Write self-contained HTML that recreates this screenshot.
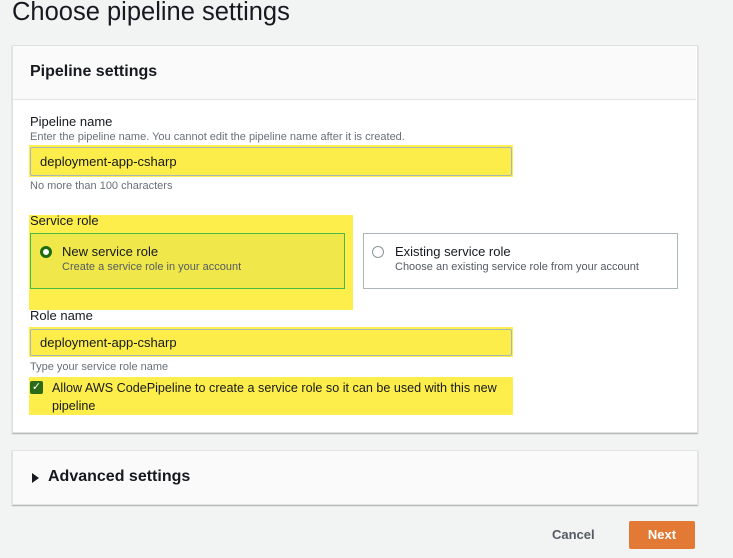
<!DOCTYPE html>
<html><head><style>
body{margin:0;width:733px;height:558px;background:#f2f3f3;font-family:"Liberation Sans",sans-serif;position:relative;overflow:hidden;color:#16191f}
.a{position:absolute}
</style></head><body>
<div class="a" style="left:12px;top:-2px;font-size:25.5px;color:#16191f">Choose pipeline settings</div>
<div class="a" style="left:12px;top:45px;width:684px;height:386px;background:#fff;border:1px solid #e0e0e0;box-shadow:0 1px 1px #aaa"></div>
<div class="a" style="left:13px;top:46px;width:683px;height:53px;background:#fafafa;border-bottom:1px solid #e4e4e4"></div>
<div class="a" style="left:30px;top:63px;font-size:16px;font-weight:bold">Pipeline settings</div>
<div class="a" style="left:30px;top:114px;font-size:13px">Pipeline name</div>
<div class="a" style="left:30px;top:131px;font-size:11px;color:#687078">Enter the pipeline name. You cannot edit the pipeline name after it is created.</div>
<div class="a" style="left:29px;top:145px;width:484px;height:32px;background:#fdee4b"></div>
<div class="a" style="left:30px;top:147px;width:480px;height:27px;border:1px solid #aab7b8;border-radius:2px;background:#fced4a"></div>
<div class="a" style="left:40px;top:154px;font-size:13px">deployment-app-csharp</div>
<div class="a" style="left:30px;top:180px;font-size:11px;color:#687078">No more than 100 characters</div>
<div class="a" style="left:29px;top:215px;width:324px;height:95px;background:#fdee4b"></div>
<div class="a" style="left:30px;top:213px;font-size:13px">Service role</div>
<div class="a" style="left:30px;top:233px;width:313px;height:54px;border:1px solid #44b944;background:#f0e84a"></div>
<div class="a" style="left:40px;top:246px;width:6px;height:6px;border:3px solid #1d6b10;border-radius:50%;background:#fff"></div>
<div class="a" style="left:62px;top:244px;font-size:13px">New service role</div>
<div class="a" style="left:62px;top:261px;font-size:11px;color:#545b64">Create a service role in your account</div>
<div class="a" style="left:363px;top:233px;width:313px;height:54px;border:1px solid #aab7b8;background:#fff"></div>
<div class="a" style="left:372px;top:246px;width:10px;height:10px;border:1px solid #879596;border-radius:50%"></div>
<div class="a" style="left:395px;top:244px;font-size:13px">Existing service role</div>
<div class="a" style="left:395px;top:261px;font-size:11px;color:#545b64">Choose an existing service role from your account</div>
<div class="a" style="left:30px;top:308px;font-size:13px">Role name</div>
<div class="a" style="left:29px;top:327px;width:484px;height:30px;background:#fdee4b"></div>
<div class="a" style="left:30px;top:329px;width:480px;height:25px;border:1px solid #aab7b8;border-radius:2px;background:#fced4a"></div>
<div class="a" style="left:40px;top:335px;font-size:13px">deployment-app-csharp</div>
<div class="a" style="left:30px;top:361px;font-size:11px;color:#687078">Type your service role name</div>
<div class="a" style="left:29px;top:377px;width:484px;height:38px;background:#fdee4b"></div>
<div class="a" style="left:30px;top:381px;width:13px;height:13px;background:#2b6a16;border-radius:2px;color:#fff;font-size:11px;line-height:13px;text-align:center">✓</div>
<div class="a" style="left:52px;top:379px;width:455px;font-size:12.6px;line-height:18px">Allow AWS CodePipeline to create a service role so it can be used with this new pipeline</div>
<div class="a" style="left:12px;top:450px;width:684px;height:53px;background:#fafafa;border:1px solid #e4e4e4;box-shadow:0 1px 1px #aaa"></div>
<div class="a" style="left:32px;top:473px;width:0;height:0;border-left:7px solid #16191f;border-top:5px solid transparent;border-bottom:5px solid transparent"></div>
<div class="a" style="left:48px;top:468px;font-size:16px;font-weight:bold">Advanced settings</div>
<div class="a" style="left:552px;top:527px;font-size:13px;font-weight:bold;color:#545b64">Cancel</div>
<div class="a" style="left:629px;top:521px;width:66px;height:28px;background:#e27a35;border-radius:2px;color:#fff;font-size:13px;font-weight:bold;text-align:center;line-height:28px">Next</div>
</body></html>
